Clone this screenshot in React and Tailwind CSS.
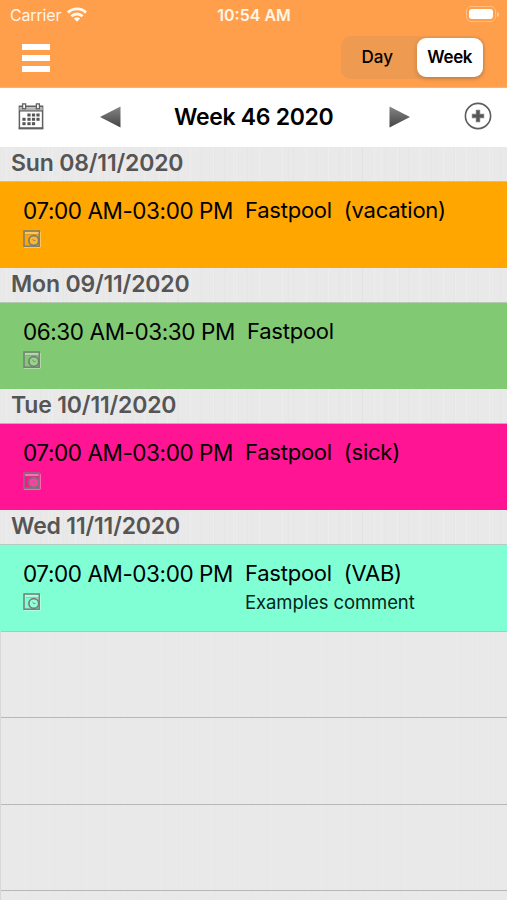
import React from "react";

const days = [
  { date: "Sun 08/11/2020", time: "07:00 AM-03:00 PM", job: "Fastpool", note: "(vacation)", bg: "bg-[#ffa600]", line: "border-[#c9bfae]" },
  { date: "Mon 09/11/2020", time: "06:30 AM-03:30 PM", job: "Fastpool", bg: "bg-[#82c973]", line: "border-[#b5ccb2]", wide: true },
  { date: "Tue 10/11/2020", time: "07:00 AM-03:00 PM", job: "Fastpool", note: "(sick)", bg: "bg-[#ff1493]", line: "border-[#d3a5bd]" },
  { date: "Wed 11/11/2020", time: "07:00 AM-03:00 PM", job: "Fastpool", note: "(VAB)", comment: "Examples comment", bg: "bg-[#80ffd5]", line: "border-[#b0cec4]" },
];

const grain =
  "bg-[#e9e9e9] bg-[repeating-linear-gradient(90deg,transparent_0_6px,#ffffff30_6px_7px,transparent_7px_17px,#00000004_17px_18px,transparent_18px_23px),repeating-linear-gradient(90deg,transparent_0_11px,#ffffff20_11px_12px,transparent_12px_29px,#00000003_29px_30px,transparent_30px_37px)]";

const plain =
  "bg-[#e9e9e9] bg-[repeating-linear-gradient(90deg,transparent_0_11px,#ffffff18_11px_12px,transparent_12px_29px,#00000002_29px_30px,transparent_30px_37px)]";

function Wifi() {
  return (
    <svg width="20" height="15" viewBox="0 0 20 15" className="ml-[6px] -mt-px" fill="none" stroke="#fff8ee" strokeWidth="2.9">
      <path d="M1 5.6C6 .6 14 .6 19 5.6" />
      <path d="M4.4 9.3C7.6 6.3 12.4 6.3 15.6 9.3" />
      <path d="M6.8 11.6Q10 8.9 13.2 11.6L10 14.8Z" fill="#fff8ee" stroke="none" />
    </svg>
  );
}

function CalendarIcon() {
  const dots = [[11, 12], [15.5, 12], [20, 12], [6, 16.3], [11, 16.3], [15.5, 16.3], [20, 16.3], [6, 20.7], [11, 20.7], [15.5, 20.7]];
  return (
    <svg width="26" height="27" viewBox="0 0 26 27" fill="none" stroke="#606060" className="-mt-[2px]">
      <path d="M4 3.2H1.4V25.2H24.6V3.2H22M8 3.2H18" strokeWidth="1.5" />
      <path d="M1.4 4.2H24.6V7.4H1.4Z" fill="#b5b5b5" stroke="none" />
      <path d="M1.4 7.9H24.6" strokeWidth="1.3" />
      <path d="M.7 25.4H25.3" strokeWidth="2" />
      <rect x="4.6" y=".9" width="3" height="4.8" fill="#fff" strokeWidth="1.3" />
      <rect x="18.4" y=".9" width="3" height="4.8" fill="#fff" strokeWidth="1.3" />
      {dots.map(([x, y]) => (
        <rect key={x + "-" + y} x={x - 1.6} y={y - 1.5} width="3.2" height="3" fill="#555" stroke="none" />
      ))}
    </svg>
  );
}

function Arrow({ right }) {
  return (
    <svg width="21" height="22" viewBox="0 0 21 22" className={right ? "-mt-[2px] ml-[55px]" : "-mt-[2px] ml-[56px]"}>
      <defs>
        <linearGradient id="arrowShade" x1="0" y1="0" x2="0" y2="1">
          <stop offset="0" stopColor="#858585" />
          <stop offset="1" stopColor="#444" />
        </linearGradient>
      </defs>
      <path d={right ? "M.5.5 21 11 .5 21.5Z" : "M20.5.5 0 11 20.5 21.5Z"} fill="url(#arrowShade)" />
    </svg>
  );
}

function PlusIcon() {
  return (
    <svg width="28" height="28" viewBox="0 0 28 28" fill="none" className="-mt-[3px] ml-[54px]">
      <circle cx="14" cy="14" r="12.6" stroke="#5c5c5c" strokeWidth="1.6" />
      <path d="M14 7.8V20.2M7.8 14H20.2" stroke="#808080" strokeWidth="4.4" />
      <path d="M14 8.7V19.3M8.7 14H19.3" stroke="#555" strokeWidth="2.6" />
    </svg>
  );
}

function ShiftIcon() {
  return (
    <svg width="18" height="18" viewBox="0 0 18 18" fill="none">
      <path d="M1 17.2H17.2V2" stroke="#ffffff" strokeOpacity=".5" />
      <rect x="1" y="1" width="15.2" height="15.2" stroke="#777d76" strokeWidth="1.5" />
      <path d="M2 3H15.5" stroke="#ffffff" strokeOpacity=".5" strokeWidth="1.5" />
      <path d="M3 4.4H15" stroke="#777d76" strokeOpacity=".5" strokeWidth=".7" />
      <circle cx="10.8" cy="10.5" r="4.9" fill="#ffffff" fillOpacity=".18" stroke="#777d76" strokeWidth="1.7" />
      <path d="M9.5 8.8 10.8 10.8 12.6 10.3" stroke="#777d76" strokeWidth=".8" />
    </svg>
  );
}

export default function App() {
  return (
    <div className="flex h-[900px] w-[507px] flex-col overflow-hidden bg-[#e9e9e9] font-['Inter','Liberation_Sans',sans-serif] text-black">
      <header className="h-[88px] shrink-0 border-b border-[#ecb587] bg-[#ff9f4b]">
        <div className="grid h-[30px] grid-cols-3 items-center pl-[10px] pr-[8px] text-[#fff5e8]">
          <div className="flex items-center text-[16px] leading-[30px]">
            <span className="tracking-[-0.15px]">Carrier</span>
            <Wifi />
          </div>
          <div className="whitespace-nowrap pr-px text-center text-[16px] font-semibold leading-[30px]">10:54 AM</div>
          <div className="-mt-[2px] flex items-center justify-end gap-px">
            <div className="h-[16px] w-[30px] rounded-[5px] border border-[#ffbd82] p-[2px]">
              <div className="h-full rounded-[3px] bg-white" />
            </div>
            <div className="h-[5px] w-[2px] rounded-r bg-[#ffc792]" />
          </div>
        </div>
        <div className="flex items-start justify-between pl-[22px] pr-[22px] pt-[6px]">
          <div className="mt-[8px] flex w-[28px] flex-col gap-[5px]">
            <i className="h-[6px] bg-white" />
            <i className="h-[6px] bg-white" />
            <i className="h-[6px] bg-white" />
          </div>
          <div className="flex h-[43px] w-[144px] rounded-[10px] bg-[#ee9a50] p-[2px] text-[17px]">
            <div className="flex w-[72px] items-center justify-center pr-[3px] pt-px font-medium">Day</div>
            <div className="ml-[2px] flex h-[39px] w-[67px] items-center justify-center rounded-[9px] bg-white pt-px font-semibold tracking-[-0.35px] shadow-[0_2px_5px_#00000030]">Week</div>
          </div>
        </div>
      </header>

      <nav className="flex h-[59px] shrink-0 items-center bg-white pl-[18px]">
        <CalendarIcon />
        <Arrow />
        <h1 className="-mt-px ml-[53px] w-[160px] whitespace-nowrap text-[23px] font-semibold tracking-[-0.32px]">Week 46 2020</h1>
        <Arrow right />
        <PlusIcon />
      </nav>

      {days.map((d) => (
        <section key={d.date} className="shrink-0">
          <h2 className={`h-[35px] border-b pl-[11px] text-[23px] font-semibold leading-[33px] tracking-[-0.17px] text-[#555] ${d.line} ${grain}`}>{d.date}</h2>
          <div className={`flex h-[86px] pl-[23px] pt-[14px] ${d.bg}`}>
            <div className={d.wide ? "w-[224px]" : "w-[222px]"}>
              <div className="whitespace-nowrap text-[22.5px] leading-[30px] tracking-[-0.42px]">{d.time}</div>
              <div className="mt-[4px]"><ShiftIcon /></div>
            </div>
            <div className="whitespace-pre">
              <div className="text-[22px] leading-[29px] tracking-[-0.24px]">{d.job}{d.note ? "  " + d.note : ""}</div>
              {d.comment && <div className="text-[18.5px] leading-[28px] tracking-[-0.1px] text-[#06241b]">{d.comment}</div>}
            </div>
          </div>
        </section>
      ))}

      <div className={`flex-1 border-l border-l-[#d8d8d8] ${plain}`}>
        <div className="h-px bg-[#a9c9be]" />
        <div className="h-[86px] border-b border-[#b7b7b7]" />
        <div className="h-[87px] border-b border-[#b7b7b7]" />
        <div className="h-[86px] border-b border-[#b7b7b7]" />
      </div>
    </div>
  );
}
